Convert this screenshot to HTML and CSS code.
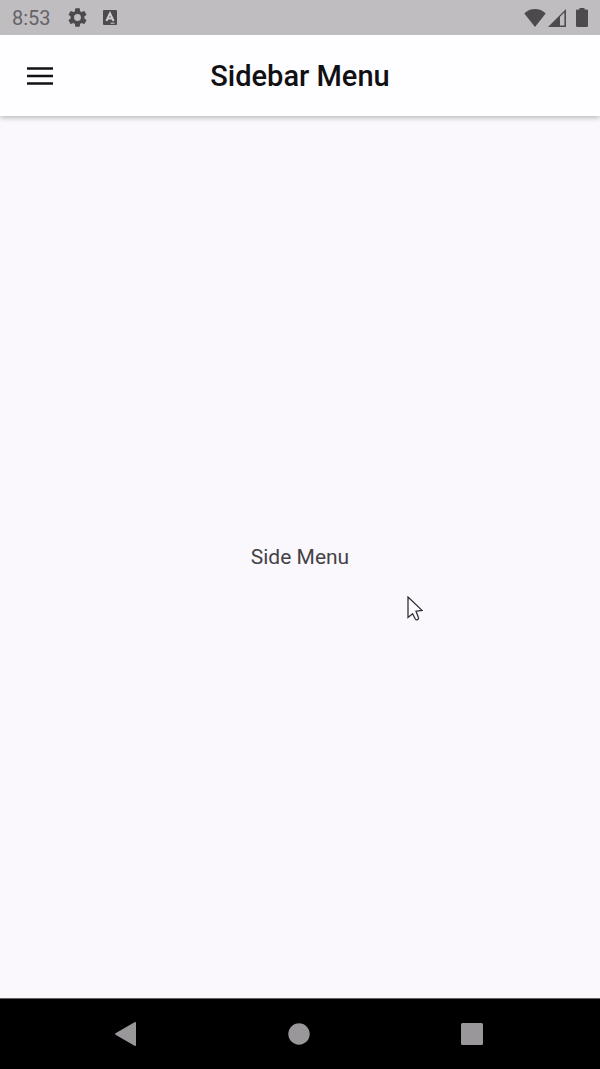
FILE: index.html
```html
<!DOCTYPE html>
<html lang="en">
<head>
<meta charset="utf-8">
<meta name="viewport" content="width=device-width, initial-scale=1">
<title>Sidebar Menu</title>
<link rel="stylesheet" href="styles.css">
</head>
<body>
<div class="screen">
  <div class="status-bar">
    <div class="status-left">
      <time class="clock">8:53</time>
      <svg class="icon-gear" viewBox="0 0 24 24" aria-hidden="true"><path d="M19.14 12.94c.04-.3.06-.61.06-.94 0-.32-.02-.64-.07-.94l2.03-1.58c.18-.14.23-.41.12-.61l-1.92-3.32c-.12-.22-.37-.29-.59-.22l-2.39.96c-.5-.38-1.03-.7-1.62-.94l-.36-2.54c-.04-.24-.24-.41-.48-.41h-3.84c-.24 0-.43.17-.47.41l-.36 2.54c-.59.24-1.13.57-1.62.94l-2.39-.96c-.22-.08-.47 0-.59.22L2.74 8.87c-.12.21-.08.47.12.61l2.03 1.58c-.05.3-.09.63-.09.94s.02.64.07.94l-2.03 1.58c-.18.14-.23.41-.12.61l1.92 3.32c.12.22.37.29.59.22l2.39-.96c.5.38 1.03.7 1.62.94l.36 2.54c.05.24.24.41.48.41h3.84c.24 0 .44-.17.47-.41l.36-2.54c.59-.24 1.13-.56 1.62-.94l2.39.96c.22.08.47 0 .59-.22l1.92-3.32c.12-.22.07-.47-.12-.61l-2.01-1.58zM12 15.6A3.6 3.6 0 1 1 12 8.4a3.6 3.6 0 0 1 0 7.2z"/></svg>
      <svg class="icon-app" viewBox="0 0 14 15" aria-hidden="true"><rect width="14" height="15" rx="1"/><path class="mark" d="M3.400 11 7 3.400 10.600 11M5 8.600h4"/><path class="mark-thin" d="M7.500 13.200h4"/></svg>
    </div>
    <div class="status-right">
      <svg class="icon-wifi" viewBox="0 0 22 18" aria-hidden="true"><path d="M11 18 .3 4.400C3.300 1.500 7 0 11 0s7.700 1.500 10.700 4.400z"/></svg>
      <svg class="icon-signal" viewBox="0 0 18 18" aria-hidden="true"><path fill-rule="evenodd" d="M0 18 18 0v18zM12 7.800V16.400h4.400V3.600z"/></svg>
      <svg class="icon-battery" viewBox="0 0 12 19" aria-hidden="true"><path d="M3.500 0h5v1.500h2.300q1.200 0 1.200 1.200v15.100q0 1.200-1.200 1.200H1.200Q0 19 0 17.800V2.700q0-1.200 1.200-1.200h2.300z"/></svg>
    </div>
  </div>
  <header class="app-bar">
    <button class="menu-button" type="button" aria-label="Open menu">
      <svg class="icon-menu" viewBox="0 0 26 18" aria-hidden="true"><path d="M0 1.500h26M0 9h26M0 16.500h26"/></svg>
    </button>
    <h1 class="title">Sidebar Menu</h1>
  </header>
  <main class="content">
    <p class="label">Side Menu</p>
    <svg class="cursor" viewBox="0 0 16 25" aria-hidden="true"><path d="M1 1v20.500l4.600-3.700 2.700 5.200q.8 1.300 2.200.7 1.500-.8.900-2.200L9 15.200l6-.8z"/></svg>
  </main>
  <nav class="nav-bar" aria-label="System">
    <button class="nav-button" type="button" aria-label="Back"><svg class="nav-icon" viewBox="0 0 24 26" aria-hidden="true"><path d="M1.500 12.200 20.500 1.200Q22 .6 22 2v22q0 1.400-1.500.8L1.500 13.800q-1-.8 0-1.600z"/></svg></button>
    <button class="nav-button" type="button" aria-label="Home"><svg class="nav-icon" viewBox="0 0 24 26" aria-hidden="true"><circle cx="12" cy="13" r="10.700"/></svg></button>
    <button class="nav-button" type="button" aria-label="Recent apps"><svg class="nav-icon" viewBox="0 0 24 26" aria-hidden="true"><rect x="1" y="2" width="22" height="22" rx="1.500"/></svg></button>
  </nav>
</div>
</body>
</html>
```
FILE: styles.css
```css
* {
  box-sizing: border-box;
}

body {
  margin: 0;
  font-family: Roboto, "Liberation Sans", sans-serif;
}

button {
  padding: 0;
  border: 0;
  background: none;
}

svg {
  display: block;
}

.screen {
  display: flex;
  flex-direction: column;
  min-height: 100vh;
  background: #faf8fc;
}

.status-bar {
  position: relative;
  z-index: 1;
  display: flex;
  justify-content: space-between;
  align-items: center;
  height: 35px;
  padding: 0 12px;
  background: #bfbdc0;
  color: #656366;
  fill: #4c4a4d;
}

.status-left,
.status-right {
  display: flex;
  align-items: center;
}

.clock {
  margin-right: 15px;
  font-size: 20px;
  line-height: 34px;
}

.icon-gear {
  width: 23px;
  height: 23px;
  margin-right: 14px;
}

.icon-app {
  width: 14px;
  height: 15px;
}

.mark,
.mark-thin {
  fill: none;
  stroke: #cfcdd0;
  stroke-width: 2;
}

.mark-thin {
  stroke-width: 1;
}

.icon-wifi {
  width: 22px;
  height: 18px;
  margin-right: 2px;
}

.icon-signal {
  width: 18px;
  height: 18px;
  margin-right: 10px;
}

.icon-battery {
  width: 12px;
  height: 19px;
}

.app-bar {
  display: grid;
  grid-template-columns: 28px 1fr 28px;
  align-items: center;
  height: 81px;
  padding: 0 26px;
  background: #fefdff;
  box-shadow: 0 2px 5px #00000040;
}

.menu-button {
  display: grid;
  place-items: center;
  height: 48px;
}

.icon-menu {
  width: 26px;
  height: 18px;
  fill: none;
  stroke: #111013;
  stroke-width: 2.6;
}

.title {
  margin: 0;
  color: #111013;
  font-size: 29px;
  font-weight: 500;
  line-height: 36px;
  text-align: center;
}

.content {
  position: relative;
  flex: 1;
  display: grid;
  place-items: center;
}

.label {
  margin: 0;
  color: #444246;
  font-size: 21px;
  line-height: 28px;
}

.cursor {
  position: absolute;
  top: 480px;
  left: 407px;
  width: 16px;
  height: 25px;
  fill: #fefdff;
  stroke: #302e32;
  stroke-width: 1.3;
}

.nav-bar {
  display: grid;
  grid-template-columns: repeat(3, 1fr);
  height: 71px;
  padding: 0 41px 0 39px;
  border-top: 1px solid #656366;
  background: #000;
}

.nav-button {
  display: grid;
  place-items: center;
}

.nav-icon {
  width: 24px;
  height: 26px;
  fill: #9a979b;
}
```
